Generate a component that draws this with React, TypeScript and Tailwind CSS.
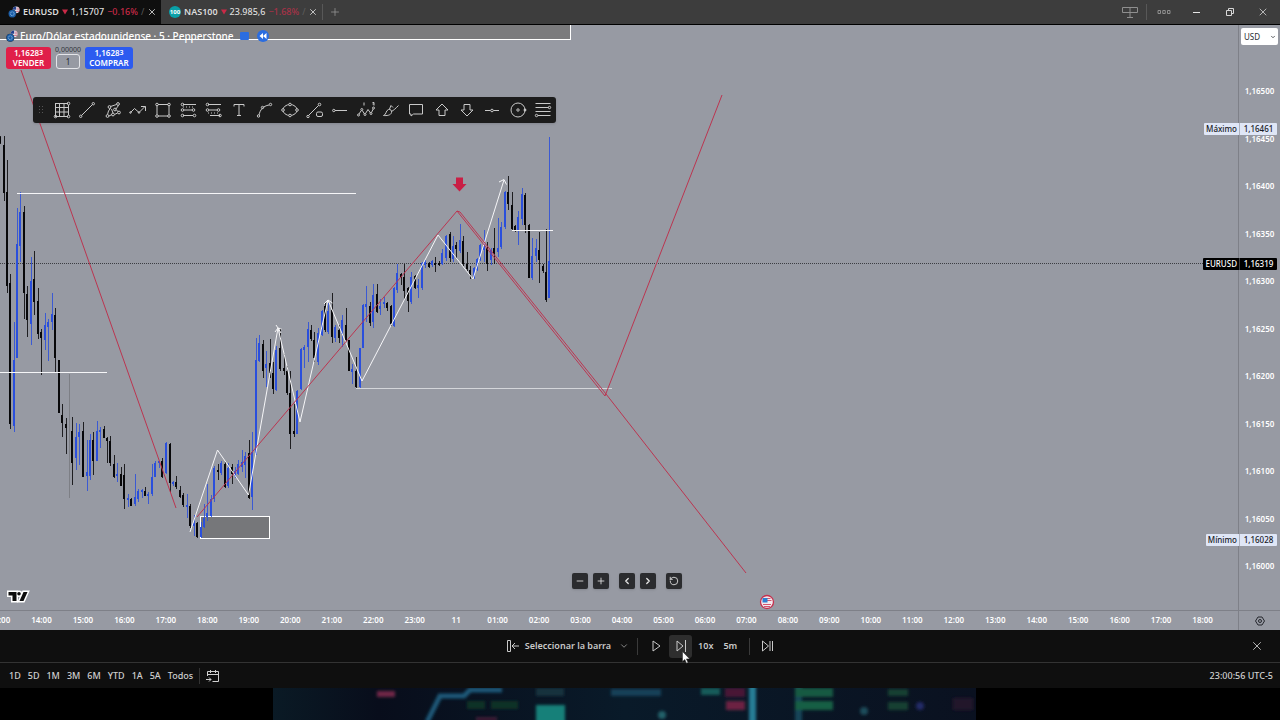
import type { ReactNode } from "react"
import { ChevronDown, ChevronLeft, ChevronRight, Minus, Plus, RotateCcw, X } from "lucide-react"

// [x, high, low, bodyTop, bodyBottom, up]
type Candle = [number, number, number, number, number, 0 | 1]

const CANDLES: Candle[] = [
  [0, 136, 144, 137, 143, 0],
  [4, 136, 201, 145, 193, 0],
  [7, 160, 293, 192, 286, 0],
  [10, 274, 429, 283, 424, 0],
  [14, 322, 432, 360, 426, 1],
  [17, 208, 358, 244, 358, 1],
  [20, 192, 262, 212, 246, 1],
  [24, 206, 319, 212, 293, 0],
  [27, 286, 337, 294, 320, 0],
  [31, 257, 345, 281, 324, 1],
  [34, 251, 315, 279, 302, 0],
  [38, 288, 339, 301, 334, 0],
  [41, 329, 375, 332, 338, 0],
  [45, 313, 350, 325, 340, 1],
  [48, 319, 361, 322, 327, 1],
  [52, 293, 330, 314, 322, 1],
  [55, 308, 372, 315, 358, 0],
  [59, 360, 413, 360, 413, 0],
  [62, 404, 437, 415, 423, 0],
  [66, 418, 454, 424, 428, 0],
  [72, 417, 485, 431, 463, 0],
  [76, 423, 470, 437, 458, 1],
  [79, 424, 465, 432, 437, 1],
  [83, 422, 477, 431, 477, 0],
  [87, 440, 491, 472, 476, 1],
  [90, 434, 480, 440, 476, 1],
  [93, 432, 475, 440, 461, 0],
  [97, 421, 461, 431, 461, 1],
  [100, 427, 448, 430, 432, 1],
  [104, 426, 438, 429, 438, 0],
  [107, 437, 463, 438, 441, 0],
  [110, 436, 466, 441, 463, 0],
  [114, 455, 478, 464, 477, 0],
  [117, 463, 482, 474, 476, 1],
  [121, 467, 486, 474, 486, 0],
  [124, 464, 509, 475, 499, 0],
  [128, 494, 507, 498, 500, 1],
  [131, 498, 506, 499, 506, 0],
  [135, 474, 506, 497, 504, 1],
  [138, 489, 502, 491, 499, 1],
  [142, 489, 498, 490, 492, 1],
  [145, 487, 496, 491, 496, 0],
  [148, 492, 504, 494, 496, 1],
  [152, 464, 496, 477, 494, 1],
  [155, 461, 477, 463, 477, 1],
  [159, 461, 468, 461, 463, 1],
  [162, 458, 478, 461, 477, 0],
  [166, 442, 474, 443, 473, 1],
  [170, 443, 492, 444, 483, 0],
  [173, 481, 486, 482, 484, 1],
  [176, 476, 489, 482, 487, 0],
  [180, 486, 498, 490, 497, 0],
  [183, 493, 507, 495, 505, 0],
  [187, 494, 518, 505, 507, 1],
  [190, 504, 528, 506, 526, 0],
  [194, 515, 536, 523, 526, 1],
  [197, 522, 538, 523, 537, 0],
  [201, 522, 538, 527, 537, 1],
  [204, 504, 528, 518, 527, 1],
  [207, 484, 521, 513, 517, 1],
  [211, 495, 517, 499, 516, 1],
  [214, 466, 502, 468, 499, 1],
  [218, 464, 480, 470, 472, 0],
  [221, 461, 475, 463, 473, 1],
  [225, 462, 488, 464, 487, 0],
  [228, 463, 488, 468, 486, 1],
  [232, 464, 484, 467, 474, 0],
  [235, 467, 478, 471, 476, 1],
  [238, 460, 475, 464, 474, 1],
  [242, 450, 472, 462, 467, 1],
  [245, 452, 478, 456, 465, 1],
  [249, 440, 499, 453, 498, 0],
  [252, 432, 510, 452, 497, 1],
  [256, 338, 455, 360, 453, 1],
  [259, 335, 362, 343, 361, 1],
  [263, 340, 378, 344, 371, 0],
  [266, 351, 387, 364, 368, 1],
  [270, 339, 378, 363, 373, 0],
  [273, 362, 394, 373, 389, 0],
  [276, 346, 391, 350, 390, 1],
  [280, 328, 371, 348, 369, 0],
  [284, 354, 375, 368, 371, 0],
  [287, 366, 395, 371, 393, 0],
  [290, 371, 449, 393, 434, 0],
  [294, 404, 437, 431, 434, 0],
  [297, 390, 434, 391, 434, 1],
  [301, 348, 390, 349, 389, 1],
  [304, 345, 368, 347, 350, 1],
  [308, 322, 362, 329, 347, 1],
  [311, 325, 341, 330, 339, 0],
  [314, 332, 362, 340, 358, 0],
  [318, 328, 365, 333, 362, 1],
  [322, 310, 336, 311, 335, 1],
  [325, 303, 332, 306, 330, 0],
  [328, 303, 334, 311, 332, 1],
  [332, 293, 343, 310, 337, 0],
  [335, 325, 342, 327, 338, 1],
  [339, 325, 343, 330, 338, 0],
  [342, 315, 347, 320, 334, 1],
  [346, 308, 341, 325, 340, 0],
  [349, 340, 371, 340, 371, 0],
  [352, 364, 384, 369, 372, 1],
  [356, 357, 388, 371, 387, 0],
  [360, 348, 388, 348, 387, 1],
  [363, 304, 348, 305, 348, 1],
  [366, 286, 322, 304, 307, 1],
  [370, 302, 326, 306, 323, 0],
  [373, 284, 328, 295, 322, 1],
  [377, 284, 313, 294, 312, 0],
  [380, 299, 315, 306, 309, 1],
  [384, 297, 308, 302, 304, 1],
  [387, 302, 311, 303, 308, 0],
  [391, 305, 326, 306, 324, 0],
  [394, 287, 327, 288, 326, 1],
  [397, 264, 293, 273, 290, 1],
  [401, 273, 285, 274, 277, 0],
  [404, 264, 300, 277, 291, 0],
  [408, 287, 312, 288, 301, 0],
  [411, 272, 304, 277, 302, 1],
  [415, 275, 289, 276, 288, 0],
  [418, 279, 298, 285, 288, 1],
  [422, 262, 290, 263, 288, 1],
  [425, 260, 268, 262, 265, 1],
  [429, 262, 268, 263, 267, 0],
  [432, 260, 267, 261, 265, 1],
  [435, 257, 272, 263, 265, 0],
  [439, 261, 266, 263, 265, 0],
  [442, 249, 265, 253, 264, 1],
  [446, 235, 261, 236, 258, 1],
  [450, 232, 262, 234, 258, 0],
  [453, 236, 262, 246, 259, 1],
  [456, 242, 258, 245, 249, 0],
  [460, 224, 253, 240, 251, 1],
  [463, 236, 266, 241, 264, 0],
  [467, 252, 271, 264, 269, 0],
  [470, 266, 279, 270, 275, 0],
  [474, 267, 279, 268, 278, 1],
  [477, 258, 271, 259, 270, 1],
  [480, 244, 261, 245, 260, 1],
  [484, 230, 262, 245, 250, 1],
  [487, 242, 271, 248, 264, 0],
  [491, 248, 265, 250, 260, 1],
  [494, 228, 264, 248, 254, 0],
  [498, 218, 257, 248, 252, 1],
  [501, 222, 249, 227, 247, 1],
  [505, 191, 229, 192, 227, 1],
  [508, 176, 210, 192, 204, 0],
  [512, 192, 230, 205, 229, 0],
  [515, 225, 232, 226, 230, 0],
  [518, 211, 245, 217, 230, 1],
  [522, 188, 225, 194, 219, 1],
  [525, 193, 233, 195, 225, 0],
  [529, 224, 278, 225, 278, 0],
  [532, 238, 280, 256, 278, 1],
  [536, 239, 262, 248, 256, 1],
  [539, 232, 283, 250, 260, 0],
  [543, 264, 273, 266, 271, 0],
  [546, 229, 302, 272, 300, 0],
  [549, 137, 298, 261, 298, 1],
]

const PRICES = [
  "1,16500", "1,16450", "1,16400", "1,16350", "1,16300", "1,16250",
  "1,16200", "1,16150", "1,16100", "1,16050", "1,16000",
]

const HOURS = [
  "13:00", "14:00", "15:00", "16:00", "17:00", "18:00", "19:00", "20:00", "21:00", "22:00",
  "23:00", "11", "01:00", "02:00", "03:00", "04:00", "05:00", "06:00", "07:00", "08:00",
  "09:00", "10:00", "11:00", "12:00", "13:00", "14:00", "15:00", "16:00", "17:00", "18:00",
]

const RANGES = ["1D", "5D", "1M", "3M", "6M", "YTD", "1A", "5A", "Todos"]

// Drawing tools, all on an 18x18 grid
const TOOLS: { name: string; icon: ReactNode }[] = [
  {
    name: "Cuadrícula",
    icon: (
      <>
        <path d="M2 2.5h13M2 6.5h14M2 11h14M2 15.5h13M2.5 2v14M6.5 2v14M11 2v14M15.5 4v10" />
        <circle cx="15.5" cy="2.5" r="1.3" />
        <circle cx="2.5" cy="15.5" r="1.3" />
        <circle cx="15.5" cy="15.5" r="1.3" />
      </>
    ),
  },
  {
    name: "Línea de tendencia",
    icon: (
      <>
        <path d="M3.5 14.5l11-11" />
        <circle cx="2.7" cy="15.3" r="1.2" />
        <circle cx="15.3" cy="2.7" r="1.2" />
      </>
    ),
  },
  {
    name: "Trayectoria",
    icon: (
      <>
        <path d="M3.5 13.500l1-3.500 2-3M6.500 5.500l6-2M14.500 4.500l-3 4M12.500 9.500l2 1M13.500 12l-3 1.500M8 13.500l-3 1.500M7.500 8l1.500 4" />
        <circle cx="3.5" cy="15" r="1.4" />
        <circle cx="5.500" cy="6" r="1.4" />
        <circle cx="14" cy="3" r="1.4" />
        <circle cx="11" cy="8.500" r="1.4" />
        <circle cx="15" cy="11.500" r="1.4" />
        <circle cx="9" cy="13.500" r="1.4" />
      </>
    ),
  },
  {
    name: "Polilínea",
    icon: (
      <>
        <path d="M1.500 11.500l4-4 4.500 4 6-6M12 5.500h4.500v4.500" />
        <circle cx="1.500" cy="11.500" r="0.800" />
        <circle cx="10" cy="11.500" r="0.800" />
      </>
    ),
  },
  {
    name: "Rectángulo",
    icon: (
      <>
        <path d="M4 3.500h10M4 15h10M3 4.500v9M15 4.500v9" />
        <circle cx="3" cy="3.500" r="1.300" />
        <circle cx="15" cy="3.500" r="1.300" />
        <circle cx="3" cy="15" r="1.300" />
        <circle cx="15" cy="15" r="1.300" />
      </>
    ),
  },
  {
    name: "Posición larga",
    icon: (
      <>
        <path d="M3 3.500h13M4 9h8M3 14.500h10M3 6h1M6 6h1M9 6h1M12 6h1" />
        <circle cx="2.500" cy="3.500" r="1.300" />
        <circle cx="2.500" cy="9" r="1.300" />
        <circle cx="13.500" cy="9" r="1.300" />
        <circle cx="2.500" cy="14.500" r="1.300" />
        <circle cx="14.500" cy="14.500" r="1.300" />
      </>
    ),
  },
  {
    name: "Posición corta",
    icon: (
      <>
        <path d="M3 3.500h13M4 9h8M5 14.500h10M3 12h1M6 12h1M9 12h1M12 12h1" />
        <circle cx="2.500" cy="3.500" r="1.300" />
        <circle cx="2.500" cy="9" r="1.300" />
        <circle cx="13.500" cy="9" r="1.300" />
        <circle cx="15" cy="14.500" r="1.300" />
      </>
    ),
  },
  { name: "Texto", icon: <path d="M4 5.500v-2h10v2M9 3.500v11M7 14.500h4" /> },
  {
    name: "Curva",
    icon: (
      <>
        <path d="M3 14c1-5 4-9 10-10" />
        <circle cx="2.500" cy="15" r="1.200" />
        <circle cx="6.500" cy="6.500" r="1.200" />
        <circle cx="14.500" cy="3.500" r="1.200" />
      </>
    ),
  },
  {
    name: "Elipse",
    icon: (
      <>
        <ellipse cx="9" cy="9" rx="7" ry="5.500" />
        <g className="fill-[#1c1c1c]">
          <circle cx="2" cy="9" r="1.300" />
          <circle cx="16" cy="9" r="1.300" />
          <circle cx="9" cy="3.500" r="1.300" />
          <circle cx="9" cy="14.500" r="1.300" />
        </g>
      </>
    ),
  },
  {
    name: "Línea con etiqueta",
    icon: (
      <>
        <path d="M2.500 14.500l10-10" />
        <circle cx="2" cy="15.500" r="1.200" />
        <circle cx="13.500" cy="3.500" r="1.300" />
        <rect x="10.500" y="11" width="6" height="4.500" rx="1.500" />
      </>
    ),
  },
  {
    name: "Rayo horizontal",
    icon: (
      <>
        <path d="M4 9.500h12" />
        <circle cx="2.800" cy="9.500" r="1.200" />
      </>
    ),
  },
  {
    name: "Ondas de Elliott",
    icon: (
      <>
        <path d="M2 13l2.300-3.500M5.300 9.500l2.200 3.500M8.500 12.500l2.500-4 2.500 3.500M14.500 11.500l1.700-3.500M7 1.500v3M15.500 1.500h1.500v1.500h-1.500M17 3v1.500" />
        <circle cx="1.500" cy="14" r="1" />
        <circle cx="4.800" cy="8.500" r="1" />
        <circle cx="8" cy="13.500" r="1" />
        <circle cx="14" cy="12.500" r="1" />
        <circle cx="16.500" cy="7" r="1" />
      </>
    ),
  },
  {
    name: "Pincel",
    icon: <path d="M1.500 14.500c3-.5 2-5 5-6 2-.5 3.500 1 3 3-.7 3-5 3.300-8 3zM7.500 8l1.500-3.500 2 2M9.500 10.500c2-1 4.500-3.500 7-6" />,
  },
  { name: "Comentario", icon: <path d="M2.500 3.500h13v9.500h-9l-2.500 2v-2h-1.500z" /> },
  { name: "Flecha arriba", icon: <path d="M9 3l6 6h-3v5.500h-6v-5.500h-3z" /> },
  { name: "Flecha abajo", icon: <path d="M9 15l6-6h-3v-5.500h-6v5.500h-3z" /> },
  {
    name: "Línea horizontal",
    icon: (
      <>
        <path d="M2 9.500h5.500M10.500 9.500h5.500" />
        <circle cx="9" cy="9.500" r="1.300" />
      </>
    ),
  },
  {
    name: "Círculo",
    icon: (
      <>
        <circle cx="9" cy="9" r="7" />
        <circle cx="9" cy="9" r="1.200" />
        <circle cx="16" cy="9" r="1" className="fill-[#d0d0d0]" />
      </>
    ),
  },
  {
    name: "Retroceso de Fibonacci",
    icon: (
      <>
        <path d="M1.500 2.500h15M1.500 6.500h13M1.500 10.500h15M4 14.500h12.500" />
        <circle cx="15.500" cy="6.500" r="1.200" />
        <circle cx="2.500" cy="14.500" r="1.200" />
      </>
    ),
  },
]

function PairIcon() {
  return (
    <svg viewBox="0 0 14 14" className="size-3 shrink-0">
      <circle cx="9.500" cy="4.500" r="4" fill="#e9eaf2" />
      <path d="M5.500 4.500a4 4 0 0 1 4-4v4z" fill="#23408c" />
      <path d="M10 2.500h3M10 4.500h3.500M9 6.500h4" stroke="#c8475c" strokeWidth="0.800" />
      <circle cx="5" cy="9" r="4.700" fill="#17273f" />
      <circle cx="5" cy="9" r="4.200" fill="#1c5fa8" />
      <circle cx="5" cy="9" r="2.200" fill="none" stroke="#a9cdf0" strokeDasharray="1 0.700" />
    </svg>
  )
}

function DownMark() {
  return (
    <svg viewBox="0 0 6 6" className="size-1.5 shrink-0" fill="#c92a47">
      <path d="M0 .500h6L3 5.500z" />
    </svg>
  )
}

function TopBar() {
  return (
    <header className="flex h-[25px] shrink-0 items-center border-b border-black bg-[#3d3d3d] text-[9px] font-semibold text-[#dcdcdc]">
      <div className="flex h-full w-[161px] shrink-0 items-center bg-[#0f0f0f] pl-2">
        <button className="flex items-center gap-[3px] whitespace-nowrap">
          <PairIcon />
          <span>EURUSD</span>
          <DownMark />
          <span className="font-medium">1,15707</span>
          <span className="font-medium text-[#c92a47]">−0.16%</span>
          <span className="font-normal text-[#5a5a5a]">/</span>
        </button>
        <button aria-label="Cerrar EURUSD" className="mr-1 ml-auto">
          <X className="size-2.5" />
        </button>
      </div>
      <div className="flex h-full w-[161px] shrink-0 items-center pl-2">
        <button className="flex items-center gap-[3px] whitespace-nowrap">
          <span className="flex size-3 items-center justify-center rounded-full bg-[#0aa0a8] text-[6px] font-bold text-white">
            100
          </span>
          <span>NAS100</span>
          <DownMark />
          <span className="font-medium">23.985,6</span>
          <span className="font-medium text-[#a83248]">−1.68%</span>
          <span className="font-normal text-[#5e5e5e]">/</span>
        </button>
        <button aria-label="Cerrar NAS100" className="mr-1 ml-auto">
          <X className="size-2.5" />
        </button>
      </div>
      <div className="h-4 w-px bg-[#585858]" />
      <button aria-label="Nueva pestaña" className="ml-1.5 text-[#999]">
        <Plus className="size-3" strokeWidth={1.5} />
      </button>
      <div className="ml-auto flex items-center">
        <button aria-label="Diseño" className="mr-2 text-[#8f8f8f]">
          <svg viewBox="0 0 16 11" className="h-[11px] w-4" fill="none" stroke="currentColor">
            <path d="M.5.500h15v5h-15zM8 .500v10M5 10.500h6" />
          </svg>
        </button>
        <div className="h-4 w-px bg-[#585858]" />
        <button aria-label="Más opciones" className="ml-2.5 text-[#8f8f8f]">
          <svg viewBox="0 0 14 4" className="h-1 w-3.5" fill="none" stroke="currentColor">
            <path d="M1 .500h2.500v3h-2.500zM5.750.500h2.500v3h-2.500zM10.500.500h2.500v3h-2.500z" />
          </svg>
        </button>
        <button aria-label="Minimizar" className="ml-[22px] h-px w-[7px] bg-[#e6e6e6]" />
        <button aria-label="Restaurar" className="ml-[26px] text-[#d8d8d8]">
          <svg viewBox="0 0 8 8" className="size-2" fill="none" stroke="currentColor">
            <path d="M.5 2.500h5v5h-5zM2.500 2.500v-2h5v5h-2" />
          </svg>
        </button>
        <button aria-label="Cerrar" className="mr-[11px] ml-[23px]">
          <X className="size-3" strokeWidth={1.5} />
        </button>
      </div>
    </header>
  )
}

function PriceChart() {
  return (
    <svg className="absolute inset-0 size-full" aria-label="EURUSD, 5 minutos">
      {/* the plot keeps window coordinates, the top bar is 25px high */}
      <g transform="translate(0 -25)">
        <rect x="-2" y="20" width="572.500" height="19.500" fill="#7b7b7d" stroke="#fff" />
        <rect x="200.500" y="516.500" width="69" height="22" fill="#76777a" stroke="#fff" />
        <line x1="0" x2="100%" y1="263.500" y2="263.500" stroke="#3c3d42" strokeDasharray="1 1" />
        <line x1="69.500" x2="69.500" y1="374" y2="498" stroke="#7d7f85" />

        {CANDLES.map(([x, high, low, top, bottom, up]) => (
          <g key={x} fill={up ? "#2a4fdc" : "#08080a"} shapeRendering="crispEdges">
            <rect x={x} y={high} width="1" height={low - high} opacity="0.850" />
            <rect x={x - 1} y={top} width="2" height={bottom - top} />
          </g>
        ))}

        <g stroke="#f6f6f8" fill="none">
          <path d="M17 193.500H356M0 372.500H107M512 230.500H553" />
          <path d="M356 388.500H612" stroke="#d4d6da" />
          <path d="M190 532L217.500 450L248.500 495L278 328L300 422L328 300L362 381L438 235L473 279L504 180" />
          <path d="M276 325l2 3 3.500 1M275 332l3-4 3 5M324 304l4-4 4.500 3M499 182l5-2.500 2.500 5" />
        </g>

        <g stroke="#bb3550" fill="none">
          <path d="M21 70L176 508" />
          <path d="M197 517L457 211L605 396L722 95" />
          <path d="M457 211L460 212L606 394L746 573" />
        </g>

        <path d="M456 177.500h7v6.500h3.500l-7 7.500-7-7.500h3.500z" fill="#c91f45" />

        {/* economic event */}
        <circle cx="767" cy="602" r="6.500" fill="#f4e9ee" stroke="#c4304e" strokeWidth="1.300" />
        <path d="M763 604.500h8M764 606.500h6M767 600.500h4.500M767 598.500h3.500" stroke="#d2566e" />
        <rect x="762.500" y="598" width="5" height="4.500" fill="#2f7fd0" />

        {/* brand mark */}
        <g stroke="#fff" strokeWidth="3" strokeLinejoin="miter" fill="#0c0c0c">
          <path d="M8.500 592h8v9h-4v-5.500h-4z" />
          <circle cx="19" cy="593.800" r="1.800" />
          <path d="M23.500 592h4l-4 9h-4z" />
        </g>
        <g fill="#0c0c0c">
          <path d="M8.500 592h8v9h-4v-5.500h-4z" />
          <circle cx="19" cy="593.800" r="1.800" />
          <path d="M23.500 592h4l-4 9h-4z" />
        </g>
      </g>
    </svg>
  )
}

function Legend() {
  return (
    <div className="relative pt-1 pl-1.5 text-white">
      <div className="flex h-3.5 items-center gap-0.5">
        <PairIcon />
        <h1 className="text-[10px] font-medium whitespace-nowrap">
          Euro/Dólar estadounidense · 5 · Pepperstone
        </h1>
        <span className="ml-1 h-2 w-[9px] rounded-[1px] bg-[#2b6de0]" />
        <button
          aria-label="Reproducción"
          className="ml-1.5 flex size-3 items-center justify-center rounded-full bg-[#2b6de0]"
        >
          <svg viewBox="0 0 8 6" className="h-1.5 w-2" fill="#fff">
            <path d="M4 0v6L.5 3zM7.500 0v6L4 3z" />
          </svg>
        </button>
      </div>
      <div className="mt-[3px] flex items-end gap-[5px] text-[8px] leading-[10px] font-semibold">
        <button className="w-[45px] rounded-[3px] bg-[#e01f49] py-px">
          1,1628<span className="align-top text-[7px]">3</span>
          <br />
          VENDER
        </button>
        <label className="flex w-6 flex-col items-center text-[7px] leading-2 font-normal text-[#33353b]">
          0,00000
          <input
            defaultValue="1"
            className="h-[15px] w-6 rounded-[3px] border border-[#e4e5e9] text-center text-[8px] text-[#26282e]"
          />
        </label>
        <button className="w-12 rounded-[3px] bg-[#2c5bf0] py-px">
          1,1628<span className="align-top text-[7px]">3</span>
          <br />
          COMPRAR
        </button>
      </div>
    </div>
  )
}

function DrawingToolbar() {
  return (
    <div className="absolute top-[72px] left-[33px] flex h-[26px] items-center rounded-[3px] bg-[#1c1c1c] px-1 shadow">
      <svg viewBox="0 0 5 8" className="mr-[9px] ml-0.5 h-2 w-[5px]" fill="#555">
        <path d="M0 0h1v1H0zM3 0h1v1H3zM0 3h1v1H0zM3 3h1v1H3zM0 6h1v1H0zM3 6h1v1H3z" />
      </svg>
      <div className="flex w-[499px] items-center justify-between">
        {TOOLS.map((tool) => (
          <button key={tool.name} aria-label={tool.name}>
            <svg viewBox="0 0 18 18" className="size-[18px]" fill="none" stroke="#c9c9c9">
              {tool.icon}
            </svg>
          </button>
        ))}
      </div>
    </div>
  )
}

function ChartControls() {
  const button = "flex size-4 items-center justify-center rounded-[2px] bg-[#2b2c2f] text-[#e8e8e8] shadow"
  return (
    <div className="flex justify-center gap-[5px] pl-4">
      <button aria-label="Alejar" className={button}><Minus className="size-2.5" /></button>
      <button aria-label="Acercar" className={button}><Plus className="size-2.5" /></button>
      <button aria-label="Desplazar a la izquierda" className={`ml-[5px] ${button}`}><ChevronLeft className="size-2.5" strokeWidth={3} /></button>
      <button aria-label="Desplazar a la derecha" className={button}><ChevronRight className="size-2.5" strokeWidth={3} /></button>
      <button aria-label="Restablecer" className={`ml-[5px] ${button}`}><RotateCcw className="size-2.5" /></button>
    </div>
  )
}

function PriceTag({ name, price, className }: { name: string; price: string; className: string }) {
  return (
    <div className={`absolute right-[3px] flex h-3 items-center rounded-[1px] pl-0.5 ${className}`}>
      <span>{name}</span>
      <span className="ml-0.5 h-full w-px bg-[#7e8088]/50" />
      <span className="w-[37px] text-center">{price}</span>
    </div>
  )
}

function ReplayBar() {
  return (
    <div className="grid h-[33px] shrink-0 grid-cols-[1fr_auto_1fr] items-center border-b border-[#333] bg-[#0f0f0f] text-[9px] font-semibold text-[#c9c9c9]">
      <div />
      <div className="flex items-center">
        <button className="flex items-center gap-1.5">
          <svg viewBox="0 0 12 12" className="size-3" fill="none" stroke="currentColor">
            <path d="M.5.500h3v11h-3zM5 6h7M8 3L5 6l3 3" />
          </svg>
          Seleccionar la barra
          <ChevronDown className="ml-0.5 size-2.5" strokeWidth={1.5} />
        </button>
        <div className="ml-2 h-[17px] w-px bg-[#3a3a3a]" />
        <button aria-label="Reproducir" className="ml-3.5">
          <svg viewBox="0 0 9 12" className="h-3 w-[9px]" fill="none" stroke="currentColor">
            <path d="M1 1l7 5-7 5z" />
          </svg>
        </button>
        <button
          aria-label="Avanzar"
          className="relative ml-2 flex h-[23px] w-[23px] items-center justify-center rounded-[3px] bg-[#2e2e2e]"
        >
          <svg viewBox="0 0 10 12" className="h-3 w-2.5" fill="none" stroke="currentColor">
            <path d="M1 1l6 5-6 5zM9.500 0v12" />
          </svg>
          <svg viewBox="0 0 9 13" className="absolute top-4 left-[13px] h-[13px] w-[9px]" fill="#fff" stroke="#222" strokeWidth="0.500">
            <path d="M.5.500v10l2.300-2 1.700 3.800 1.600-.7-1.700-3.700h3.300z" />
          </svg>
        </button>
        <button className="ml-1.5">10x</button>
        <button className="ml-2.5">5m</button>
        <div className="ml-3 h-[17px] w-px bg-[#3a3a3a]" />
        <button aria-label="Ir a tiempo real" className="ml-3">
          <svg viewBox="0 0 11 12" className="h-3 w-[11px]" fill="none" stroke="currentColor">
            <path d="M.5 1l6 5-6 5zM8 1v10M10.500 1v10" />
          </svg>
        </button>
      </div>
      <button aria-label="Cerrar reproducción" className="mr-4 justify-self-end">
        <X className="size-3.5" strokeWidth={1.5} />
      </button>
    </div>
  )
}

function RangeBar() {
  return (
    <footer className="flex h-[25px] shrink-0 items-center bg-[#0f0f0f] px-[7px] text-[9px] font-medium text-[#d0d0d0]">
      <div className="flex items-center gap-[7px] pl-0.5">
        {RANGES.map((range) => (
          <button key={range}>{range}</button>
        ))}
      </div>
      <div className="ml-1.5 h-4 w-px bg-[#333]" />
      <button aria-label="Ir a la fecha" className="ml-1.5">
        <svg viewBox="0 0 14 14" className="size-3.5" fill="none" stroke="currentColor">
          <path d="M1.500 7v-4.500h11v10h-6M1.500 5.500h11M4.500 1v3M9.500 1v3M0 10.500h5M3 8.500l2 2-2 2" />
        </svg>
      </button>
      <span className="ml-auto">23:00:56 UTC-5</span>
    </footer>
  )
}

function Backdrop() {
  return (
    <div className="flex h-8 shrink-0 justify-center bg-black pr-[31px]">
      <svg viewBox="0 0 703 32" className="h-8 w-[703px]">
        <defs>
          <linearGradient id="glow" x1="0" x2="1">
            <stop offset="0" stopColor="#0a1a25" />
            <stop offset="0.150" stopColor="#080d1b" />
            <stop offset="0.500" stopColor="#091a29" />
            <stop offset="1" stopColor="#0a1120" />
          </linearGradient>
          <filter id="soft" x="-10%" y="-50%" width="120%" height="200%">
            <feGaussianBlur stdDeviation="1.800" />
          </filter>
        </defs>
        <rect width="703" height="32" fill="url(#glow)" />
        <g filter="url(#soft)">
          <path d="M154 34l13-26h24l6-6h32" fill="none" stroke="#1c5878" strokeWidth="5" />
          <rect x="104" y="3" width="18" height="6" fill="#6e2547" />
          <rect x="194" y="13" width="18" height="8" fill="#0c3028" />
          <rect x="218" y="13" width="27" height="8" fill="#0c3028" />
          <rect x="203" y="29" width="21" height="4" fill="#3c1c35" />
          <rect x="263" y="0" width="28" height="8" fill="#12303d" />
          <rect x="263" y="17" width="29" height="18" fill="#168079" />
          <rect x="338" y="1" width="50" height="7" fill="#124058" />
          <rect x="428" y="0" width="19" height="7" fill="#165c5a" />
          <rect x="452" y="0" width="20" height="9" fill="#4a1936" />
          <rect x="453" y="13" width="19" height="9" fill="#6c2143" />
          <rect x="476" y="-3" width="7" height="38" fill="#257d95" />
          <rect x="522" y="-3" width="7" height="38" fill="#124458" />
          <rect x="522" y="0" width="38" height="9" fill="#165a42" />
          <rect x="522" y="13" width="38" height="9" fill="#185f44" />
          <rect x="615" y="1" width="20" height="7" fill="#133f31" />
          <rect x="615" y="14" width="20" height="8" fill="#133f31" />
          <circle cx="389" cy="27" r="4" fill="#226069" />
          <circle cx="591" cy="23" r="4" fill="#1a4c5a" />
          <circle cx="647" cy="18" r="4" fill="#222a66" />
          <rect x="680" y="10" width="20" height="12" fill="#201329" />
        </g>
      </svg>
    </div>
  )
}

export default function App() {
  return (
    <div className="flex h-screen min-h-[720px] flex-col overflow-hidden bg-black font-['Noto_Sans','Open_Sans',sans-serif]">
      <TopBar />
      <main className="relative flex min-h-0 flex-1 bg-[#979aa3]">
        <div className="relative flex min-w-0 flex-1 flex-col">
          <section className="relative flex-1 overflow-hidden">
            <PriceChart />
            <Legend />
            <DrawingToolbar />
            <div className="absolute inset-x-0 bottom-[21px]">
              <ChartControls />
            </div>
          </section>
          <div className="flex h-5 shrink-0 items-center justify-between overflow-hidden border-t border-[#7e8088] pr-[15px] pb-0.5 text-[8px] font-semibold text-white">
            {HOURS.map((hour, i) => (
              <span key={i} className="w-10 shrink-0 text-center first:-ml-5">{hour}</span>
            ))}
          </div>
        </div>
        <aside className="flex w-[42px] shrink-0 flex-col border-l border-[#7e8088] text-[8px] font-semibold text-white">
          <div className="relative mx-0.5 mt-[3px] text-[#2b2d33]">
            <select aria-label="Moneda" className="h-[17px] w-full appearance-none rounded-[2px] bg-white pl-[3px] font-normal">
              <option>USD</option>
            </select>
            <ChevronDown className="pointer-events-none absolute top-1.5 right-0.5 size-1.5" strokeWidth={3} />
          </div>
          <div className="mt-[38px] mb-9 flex flex-1 flex-col justify-between text-center leading-4">
            {PRICES.map((price) => (
              <span key={price}>{price}</span>
            ))}
          </div>
          <button
            aria-label="Ajustes de escala"
            className="flex h-5 shrink-0 items-center justify-center border-t border-[#7e8088] text-[#26282e]"
          >
            <svg viewBox="0 0 10 10" className="size-2.5" fill="none" stroke="currentColor">
              <path d="M3 1h4l2.500 4L7 9H3L.5 5z" />
              <circle cx="5" cy="5" r="1.500" />
            </svg>
          </button>
        </aside>
        <div className="text-[8px] font-medium">
          <PriceTag name="Máximo" price="1,16461" className="top-[98px] bg-[#dfe6f6] text-[#17191f]" />
          <PriceTag name="EURUSD" price="1,16319" className="top-[233px] bg-black text-white" />
          <PriceTag name="Mínimo" price="1,16028" className="top-[509px] bg-[#dfe6f6] text-[#17191f]" />
        </div>
      </main>
      <ReplayBar />
      <RangeBar />
      <Backdrop />
    </div>
  )
}
